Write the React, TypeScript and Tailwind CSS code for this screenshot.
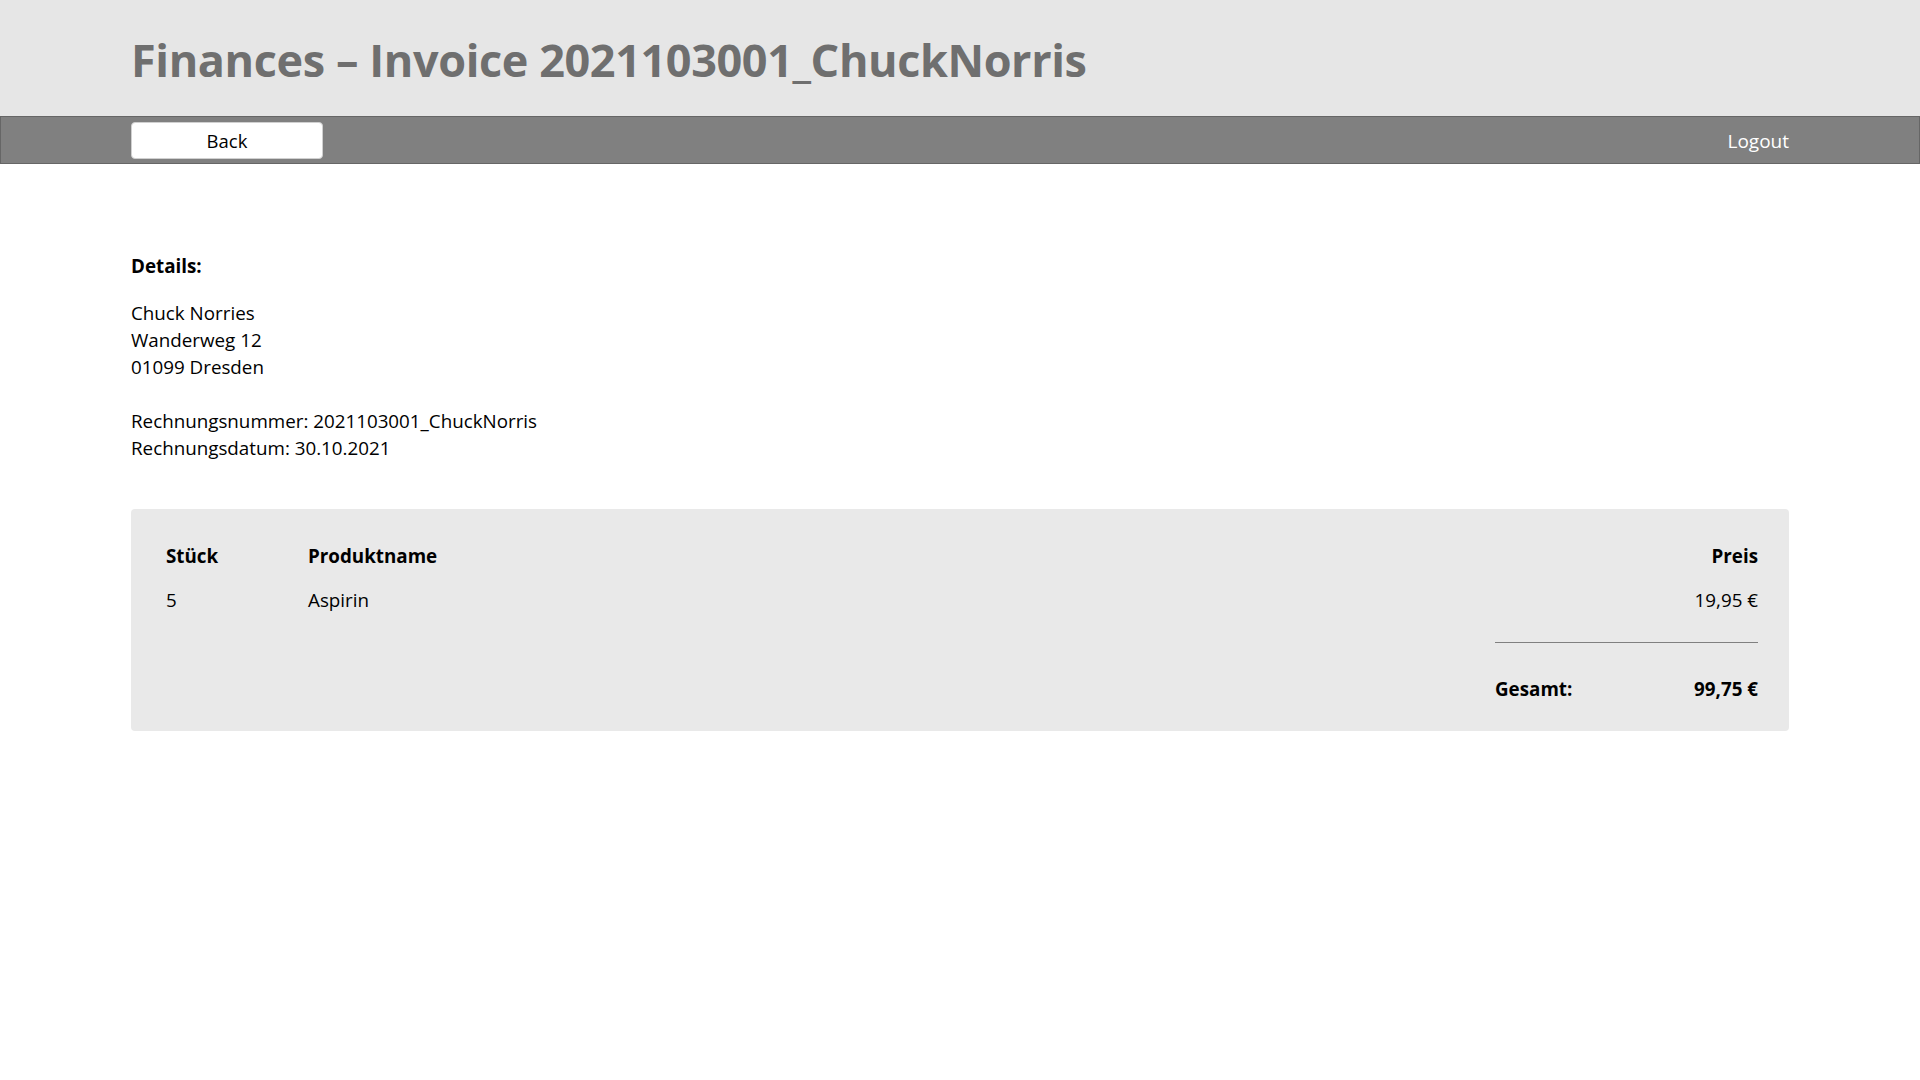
import React from "react";

export default function App() {
  return (
    <div className="min-h-screen bg-white text-black font-['Open_Sans','Noto_Sans',sans-serif]">
      <header className="h-[116px] bg-[#e6e6e6]">
        <div className="w-[1658px] mx-auto pt-[32px]">
          <h1 className="text-[45px] leading-[56px] font-bold text-[#6f6f6f] tracking-[-0.4px]">
            Finances – Invoice 2021103001_ChuckNorris
          </h1>
        </div>
      </header>
      <nav className="h-[48px] bg-[#808080] border border-[#666666]">
        <div className="w-[1658px] mx-auto flex items-start justify-between pt-[5px]">
          <button className="w-[192px] h-[37px] bg-white rounded-[4px] border border-[#d0d0d0] text-[18.5px] text-black">
            Back
          </button>
          <span className="text-[19px] text-white leading-[38px]">Logout</span>
        </div>
      </nav>
      <main className="w-[1658px] mx-auto pt-[89px] text-[18.8px] leading-[27px]">
        <p className="font-bold">Details:</p>
        <p className="mt-[20px]">
          Chuck Norries
          <br />
          Wanderweg 12
          <br />
          01099 Dresden
          <br />
          <br />
          Rechnungsnummer: 2021103001_ChuckNorris
          <br />
          Rechnungsdatum: 30.10.2021
        </p>
        <section className="mt-[47px] bg-[#e9e9e9] rounded-[4px] pl-[35px] pr-[31px] pt-[34px] pb-[28px]">
          <div className="grid grid-cols-[142px_1fr_263px] leading-[27px]">
            <div className="font-bold">Stück</div>
            <div className="font-bold">Produktname</div>
            <div className="font-bold text-right">Preis</div>
            <div className="mt-[17px]">5</div>
            <div className="mt-[17px]">Aspirin</div>
            <div className="mt-[17px] text-right">19,95 €</div>
          </div>
          <div className="flex justify-end">
            <div className="w-[263px] mt-[28px]">
              <div className="h-px bg-[#808080]" />
              <div className="flex justify-between font-bold mt-[33px]">
                <span>Gesamt:</span>
                <span>99,75 €</span>
              </div>
            </div>
          </div>
        </section>
      </main>
    </div>
  );
}
